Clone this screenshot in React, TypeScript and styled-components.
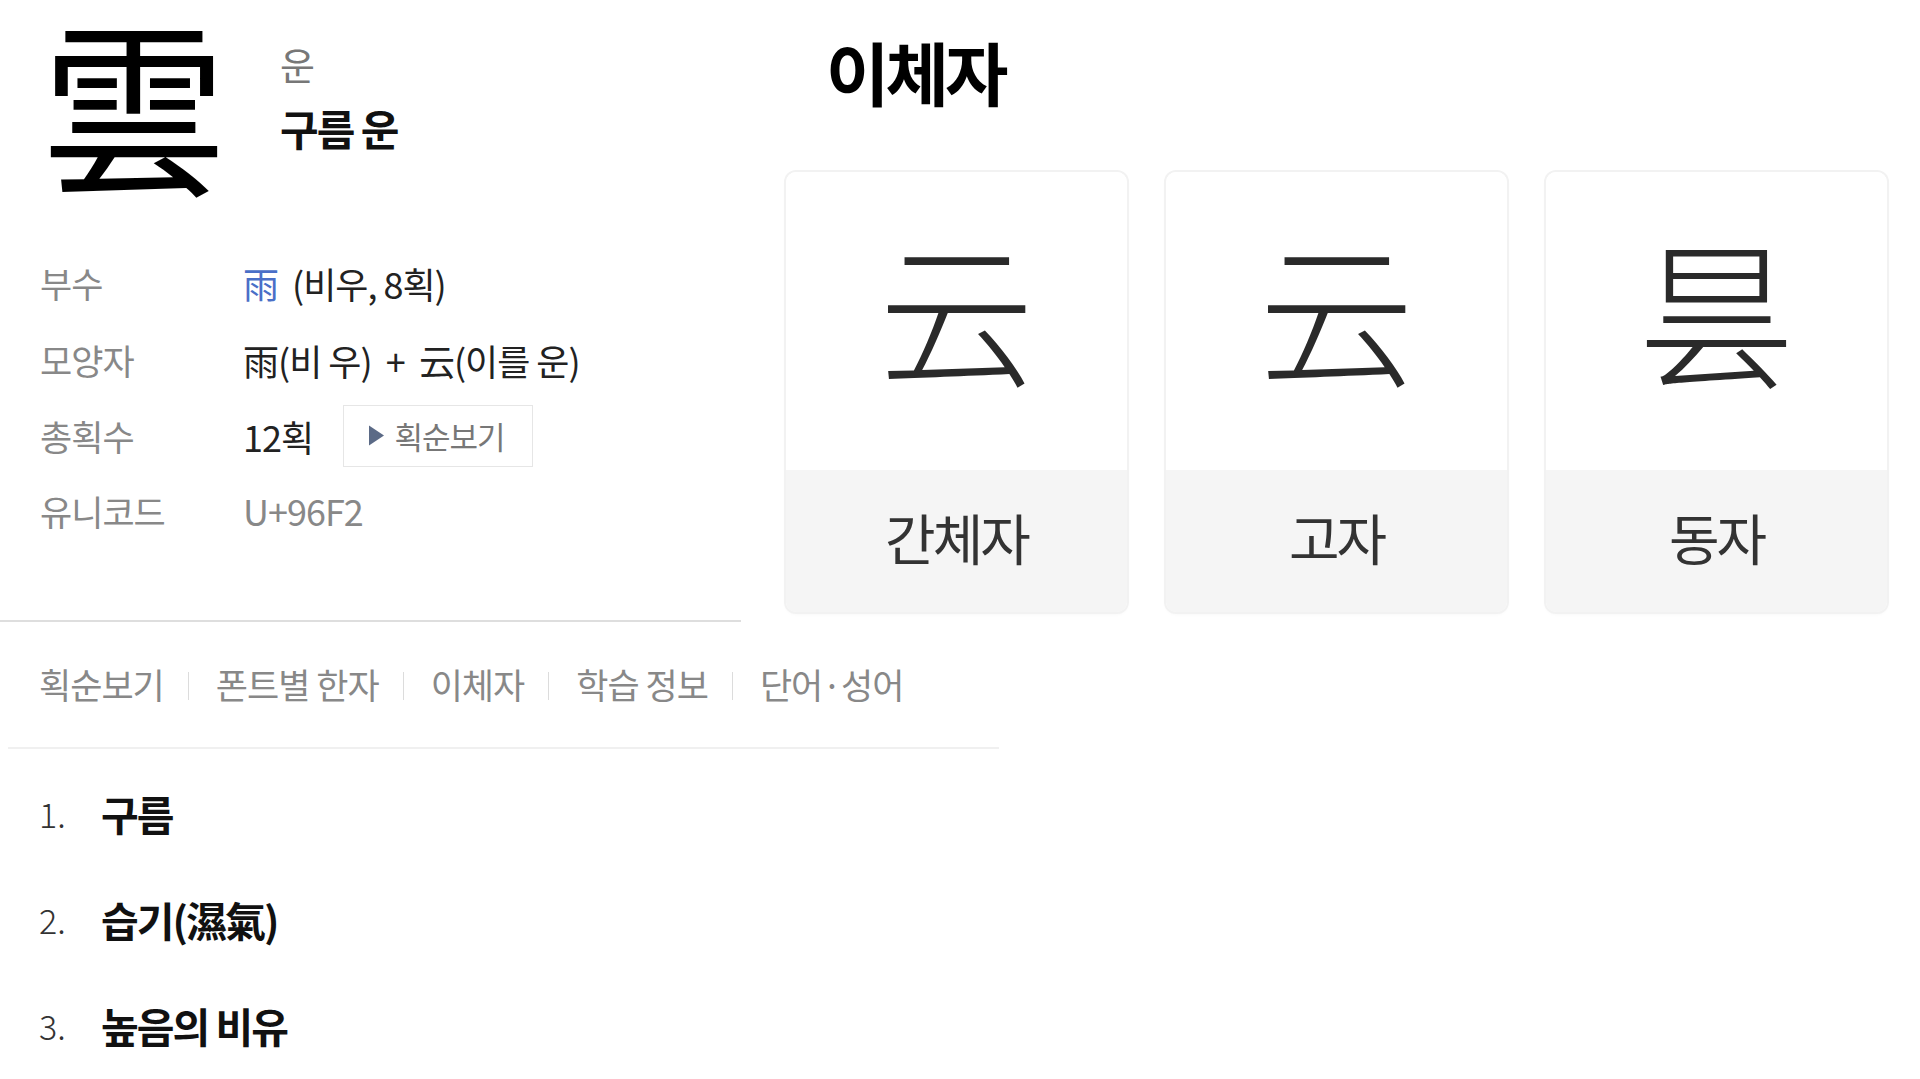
import React from "react";
import styled, { createGlobalStyle } from "styled-components";

const Global = createGlobalStyle`
  html, body { margin: 0; padding: 0; background: #fff; }
  body { font-family: "Noto Sans CJK KR", "Noto Sans", sans-serif; color: #222; }
`;

const Page = styled.div`
  width: 1920px;
  min-height: 1079px;
  display: flex;
  flex-direction: column;
`;

const TopRow = styled.div`
  display: flex;
  align-items: flex-start;
`;

const LeftCol = styled.div`
  width: 741px;
  height: 620px;
  border-bottom: 2px solid #dedede;
  display: flex;
  flex-direction: column;
`;

const Header = styled.div`
  display: flex;
  align-items: flex-start;
  padding-left: 41px;
  height: 244px;
`;

const BigChar = styled.div`
  font-size: 186px;
  line-height: 1.08;
  font-weight: 400;
  color: #000;
`;

const Readings = styled.div`
  display: flex;
  flex-direction: column;
  margin-left: 53px;
  margin-top: 36px;
  gap: 8px;
`;

const Sound = styled.div`
  font-size: 38px;
  line-height: 56px;
  color: #777;
`;

const Meaning = styled.div`
  font-size: 42px;
  line-height: 56px;
  font-weight: 700;
  color: #111;
  letter-spacing: -2px;
`;

const InfoGrid = styled.div`
  display: grid;
  grid-template-columns: 203px 1fr;
  grid-template-rows: 77px 77px 75px 74px;
  padding-left: 40px;
  align-items: center;
`;

const Label = styled.div`
  font-size: 35px;
  color: #888;
  letter-spacing: -1px;
`;

const Value = styled.div<{ $muted?: boolean }>`
  font-size: 36px;
  color: ${(p) => (p.$muted ? "#888" : "#222")};
  display: flex;
  align-items: center;
  letter-spacing: -1px;
  white-space: pre;
`;

const RadicalLink = styled.span`
  color: #4a6fc7;
  margin-right: 14px;
`;

const StrokeButton = styled.button`
  margin-left: 30px;
  height: 62px;
  width: 190px;
  border: 1px solid #e6e6e6;
  background: #fff;
  display: flex;
  align-items: center;
  justify-content: center;
  gap: 10px;
  font-family: inherit;
  font-size: 31px;
  color: #777;
  letter-spacing: -1px;
  padding: 0 4px 0 0;
`;

const RightCol = styled.div`
  margin-left: 45px;
  display: flex;
  flex-direction: column;
`;

const Title = styled.h2`
  margin: 24px 0 0 40px;
  font-size: 69px;
  line-height: 94px;
  font-weight: 700;
  color: #000;
  letter-spacing: -4px;
`;

const Cards = styled.div`
  display: flex;
  gap: 39px;
  margin-top: 54px;
`;

const Card = styled.div`
  width: 341px;
  height: 440px;
  border-radius: 10px;
  box-shadow: 0 0 0 2px #f2f2f2, 0 2px 4px rgba(0, 0, 0, 0.04);
  overflow: hidden;
  display: flex;
  flex-direction: column;
`;

const CardChar = styled.div`
  height: 298px;
  box-sizing: border-box;
  padding-bottom: 28px;
  display: flex;
  align-items: center;
  justify-content: center;
  font-size: 156px;
  font-weight: 300;
  color: #2a2a2a;
  background: #fff;
`;

const CardLabel = styled.div`
  flex: 1;
  background: #f5f5f5;
  display: flex;
  align-items: center;
  justify-content: center;
  padding-bottom: 10px;
  font-size: 55px;
  color: #333;
  letter-spacing: -3px;
`;

const Nav = styled.nav`
  display: flex;
  align-items: center;
  margin-left: 8px;
  width: 991px;
  height: 127px;
  padding: 0 0 2px 31px;
  box-sizing: border-box;
  border-bottom: 2px solid #f0f0f0;
`;

const NavItem = styled.span`
  font-size: 35px;
  color: #888;
  letter-spacing: -1px;
`;

const Sep = styled.span`
  width: 1px;
  height: 28px;
  background: #dcdcdc;
  margin: 4px 27px 0 24px;
`;

const Meanings = styled.ol`
  list-style: none;
  margin: 0;
  padding: 11px 0 0 39px;
  display: flex;
  flex-direction: column;
`;

const MeaningItem = styled.li`
  display: flex;
  align-items: center;
  height: 106px;
`;

const Num = styled.span`
  width: 62px;
  font-size: 34px;
  font-weight: 300;
  color: #333;
`;

const MeaningText = styled.span`
  font-size: 41px;
  font-weight: 700;
  color: #111;
  letter-spacing: -2px;
`;

const Triangle = () => (
  <svg width="17" height="23" viewBox="0 0 17 23">
    <path d="M1 1.5 L16 11.5 L1 21.5 Z" fill="#5b6a86" />
  </svg>
);

const variants = [
  { ch: "云", label: "간체자" },
  { ch: "云", label: "고자" },
  { ch: "昙", label: "동자" },
];

const navItems = ["획순보기", "폰트별 한자", "이체자", "학습 정보", "단어·성어"];

export default function App() {
  return (
    <Page>
      <Global />
      <TopRow>
        <LeftCol>
          <Header>
            <BigChar>雲</BigChar>
            <Readings>
              <Sound>운</Sound>
              <Meaning>구름 운</Meaning>
            </Readings>
          </Header>
          <InfoGrid>
            <Label>부수</Label>
            <Value>
              <RadicalLink>雨</RadicalLink>(비우, 8획)
            </Value>
            <Label>모양자</Label>
            <Value>{"雨(비 우)  +  云(이를 운)"}</Value>
            <Label>총획수</Label>
            <Value>
              12획
              <StrokeButton>
                <Triangle />
                획순보기
              </StrokeButton>
            </Value>
            <Label>유니코드</Label>
            <Value $muted>U+96F2</Value>
          </InfoGrid>
        </LeftCol>
        <RightCol>
          <Title>이체자</Title>
          <Cards>
            {variants.map((v) => (
              <Card key={v.label}>
                <CardChar>{v.ch}</CardChar>
                <CardLabel>{v.label}</CardLabel>
              </Card>
            ))}
          </Cards>
        </RightCol>
      </TopRow>
      <Nav>
        {navItems.map((n, i) => (
          <React.Fragment key={n}>
            {i > 0 && <Sep />}
            <NavItem>{n}</NavItem>
          </React.Fragment>
        ))}
      </Nav>
      <Meanings>
        {["구름", "습기(濕氣)", "높음의 비유"].map((m, i) => (
          <MeaningItem key={m}>
            <Num>{i + 1}.</Num>
            <MeaningText>{m}</MeaningText>
          </MeaningItem>
        ))}
      </Meanings>
    </Page>
  );
}
